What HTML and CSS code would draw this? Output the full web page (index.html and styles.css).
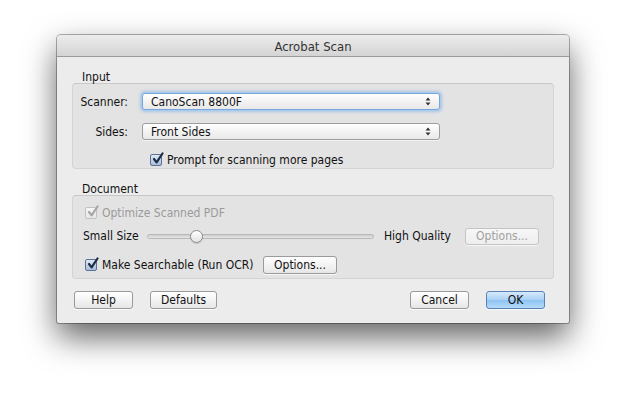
FILE: index.html
```html
<!DOCTYPE html>
<html lang="en">
<head>
  <meta charset="UTF-8" />
  <title>Acrobat Scan</title>
  <link rel="stylesheet" href="styles.css">
</head>
<body>

  <div class="stage">
    <div class="window">
      <div class="titlebar">Acrobat Scan</div>

      <div class="content">
        <div class="group-title">Input</div>
        <div class="group input-group">
          <div class="field">
            <span class="field-label">Scanner:</span>
            <div class="popup focused">
              <span>CanoScan 8800F</span>
              <svg class="arrows" width="6" height="9" viewBox="0 0 6 9"><path d="M3 0.5 L5.5 3.5 L0.5 3.5 Z M3 8.5 L5.5 5.5 L0.5 5.5 Z" fill="#333"/></svg>
            </div>
          </div>
          <div class="field">
            <span class="field-label">Sides:</span>
            <div class="popup">
              <span>Front Sides</span>
              <svg class="arrows" width="6" height="9" viewBox="0 0 6 9"><path d="M3 0.5 L5.5 3.5 L0.5 3.5 Z M3 8.5 L5.5 5.5 L0.5 5.5 Z" fill="#333"/></svg>
            </div>
          </div>
          <label class="check prompt-check">
            <span class="box checked">
              <svg width="14" height="14" viewBox="0 0 14 14"><path d="M3 7 L5.6 10.4 L11.5 1.5" fill="none" stroke="#1c2d48" stroke-width="2.2" stroke-linecap="round" stroke-linejoin="round"/></svg>
            </span>
            Prompt for scanning more pages
          </label>
        </div>

        <div class="group-title doc-title">Document</div>
        <div class="group doc-group">
          <label class="check disabled optimize-check">
            <span class="box">
              <svg width="14" height="14" viewBox="0 0 14 14"><path d="M3 7 L5.6 10.4 L11.5 1.5" fill="none" stroke="#a6a6a6" stroke-width="2.2" stroke-linecap="round" stroke-linejoin="round"/></svg>
            </span>
            Optimize Scanned PDF
          </label>

          <div class="slider-row">
            <span class="small-label">Small Size</span>
            <div class="track">
              <span class="thumb"></span>
            </div>
            <span class="high-label">High Quality</span>
            <button class="btn disabled-btn">Options...</button>
          </div>

          <div class="ocr-row">
            <label class="check">
              <span class="box checked">
                <svg width="14" height="14" viewBox="0 0 14 14"><path d="M3 7 L5.6 10.4 L11.5 1.5" fill="none" stroke="#1c2d48" stroke-width="2.2" stroke-linecap="round" stroke-linejoin="round"/></svg>
              </span>
              Make Searchable (Run OCR)
            </label>
            <button class="btn ocr-options">Options...</button>
          </div>
        </div>

        <div class="buttons">
          <button class="btn help">Help</button>
          <button class="btn defaults">Defaults</button>
          <span class="spacer"></span>
          <button class="btn cancel">Cancel</button>
          <button class="btn ok">OK</button>
        </div>
      </div>
    </div>
  </div>

</body>
</html>
```

FILE: styles.css
```css
* {
  margin: 0;
  padding: 0;
  box-sizing: border-box;
}

html, body {
  width: 100%;
  height: 100%;
  background: #fff;
  font-family: "DejaVu Sans Condensed", "DejaVu Sans", sans-serif;
  font-stretch: condensed;
  font-size: 12px;
  color: #111;
  overflow: hidden;
}

.stage {
  padding: 35px 0 0 57px;
}

.window {
  width: 512px;
  height: 288px;
  background: #ececec;
  border-radius: 4px 4px 2px 2px;
  box-shadow: 0 14px 32px rgba(0,0,0,0.62), 0 0 0 1px rgba(0,0,0,0.3);
}

.titlebar {
  height: 22px;
  line-height: 23px;
  text-align: center;
  font-size: 13px;
  color: #333;
  background: linear-gradient(#ececec, #d4d4d4);
  border-bottom: 1px solid #999;
  border-radius: 4px 4px 0 0;
}

.content {
  padding: 12px 15px 0 15px;
}

.group-title {
  height: 14px;
  line-height: 16px;
  padding-left: 10px;
}

.doc-title {
  margin-top: 12px;
}

.group {
  width: 482px;
  background: #e3e3e3;
  border: 1px solid #d3d3d3;
  border-top-color: #c8c8c8;
  border-radius: 4px;
}

.input-group {
  height: 86px;
  padding-top: 9px;
}

.field {
  display: flex;
  align-items: center;
  height: 17px;
  margin-bottom: 13px;
}

.field-label {
  width: 55px;
  margin-right: 14px;
  text-align: right;
}

.popup {
  width: 298px;
  height: 17px;
  display: flex;
  align-items: center;
  justify-content: space-between;
  padding: 0 8px 0 8px;
  background: linear-gradient(#ffffff, #f1f1f1 60%, #e9e9e9);
  border: 1px solid #9d9d9d;
  border-radius: 3px;
  box-shadow: 0 1px 0 rgba(255,255,255,0.6);
}

.popup.focused {
  border-color: #78a6da;
  box-shadow: 0 0 0 1px #a9cbf0, 0 0 3px 2px rgba(120,170,225,0.55);
}

.arrows {
  display: block;
}

.check {
  display: flex;
  align-items: center;
  gap: 5px;
  height: 14px;
}

.prompt-check {
  margin-left: 77px;
}

.box {
  position: relative;
  width: 12px;
  height: 12px;
  border: 1px solid #8d8d8d;
  border-radius: 2px;
  background: linear-gradient(#fcfcfc, #e4e4e4);
}

.box.checked {
  border-color: #5d7394;
  background: linear-gradient(#dfe8f4, #a9bdd8);
}

.box svg {
  position: absolute;
  left: 0;
  top: -3px;
}

.check.disabled {
  color: #9a9a9a;
}

.check.disabled .box {
  border-color: #c2c2c2;
  background: linear-gradient(#f6f6f6, #e8e8e8);
}

.doc-group {
  height: 84px;
  padding: 10px 13px 0 10px;
}

.optimize-check {
  margin-left: 2px;
}

.slider-row {
  display: flex;
  align-items: center;
  height: 18px;
  margin-top: 7px;
}

.small-label {
  width: 64px;
}

.track {
  position: relative;
  width: 227px;
  height: 5px;
  border: 1px solid #b8b8b8;
  border-radius: 3px;
  background: linear-gradient(#cdcdcd, #e6e6e6);
}

.thumb {
  position: absolute;
  left: 42px;
  top: -5px;
  width: 13px;
  height: 13px;
  border-radius: 50%;
  border: 1px solid #8e8e8e;
  background: linear-gradient(#ffffff, #e3e3e3);
  box-shadow: 0 1px 1px rgba(0,0,0,0.15);
}

.high-label {
  margin-left: 10px;
  width: 81px;
}

.btn {
  font-family: inherit;
  font-stretch: condensed;
  font-size: 12px;
  color: #111;
  height: 18px;
  line-height: 16px;
  background: linear-gradient(#ffffff, #f3f3f3 50%, #e6e6e6);
  border: 1px solid #9a9a9a;
  border-radius: 3px;
  box-shadow: 0 1px 0 rgba(255,255,255,0.7);
}

.disabled-btn {
  width: 74px;
  height: 17px;
  line-height: 15px;
  color: #a0a0a0;
  border-color: #c4c4c4;
  background: linear-gradient(#f7f7f7, #eeeeee);
}

.ocr-row {
  display: flex;
  align-items: center;
  height: 18px;
  margin-top: 11px;
  padding-left: 2px;
}

.ocr-row .check {
  width: 180px;
}

.ocr-options {
  width: 74px;
  margin-left: -2px;
}

.buttons {
  display: flex;
  align-items: center;
  margin-top: 12px;
  margin-left: 2px;
  margin-right: 9px;
}

.help, .cancel, .ok {
  width: 59px;
}

.defaults {
  width: 67px;
  margin-left: 17px;
}

.spacer {
  flex: 1;
}

.ok {
  margin-left: 17px;
  border-color: #5a82b4;
  background: linear-gradient(#d6e9fb, #a9d0f5 50%, #8ec3f2 51%, #b6dbfa);
}
```
